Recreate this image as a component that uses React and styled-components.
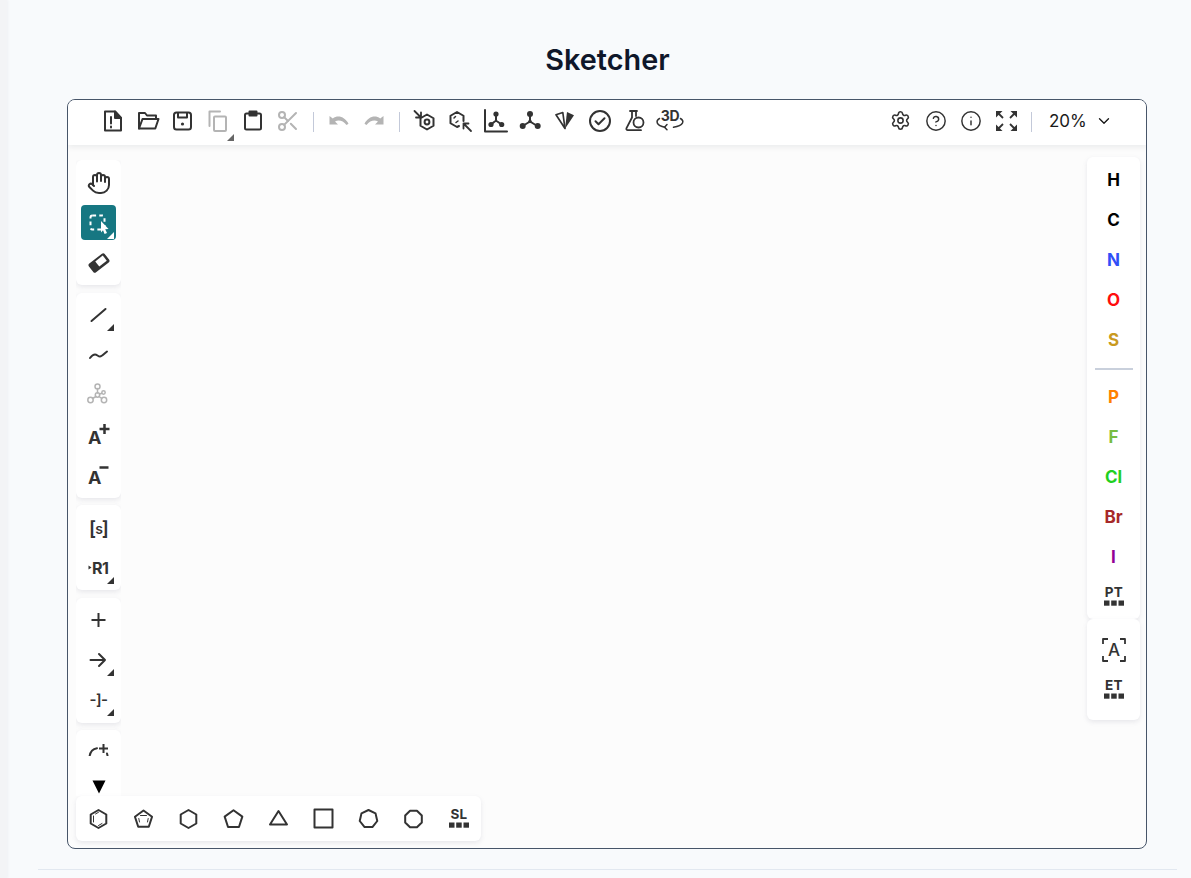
import React from "react";
import styled, { createGlobalStyle } from "styled-components";
import { Hand, Settings, CircleHelp, Info, ChevronDown, Scissors } from "lucide-react";

const INK = "#333333";
const OFF = "#b4b4b4";

const polyPoints = (n, r, start = -90, cx = 11.5, cy = 12) =>
  Array.from({ length: n }, (_, i) => {
    const a = ((start + (360 / n) * i) * Math.PI) / 180;
    return `${(cx + r * Math.cos(a)).toFixed(2)},${(cy + r * Math.sin(a)).toFixed(2)}`;
  }).join(" ");

const Global = createGlobalStyle`
  html, body { margin: 0; padding: 0; height: 100%; }
  body { background: #f8fafc; font-family: Inter, "Liberation Sans", sans-serif; overflow: hidden; }
`;

const Page = styled.div`
  display: flex;
  height: 878px;
  overflow: hidden;
`;
const SideEdge = styled.div`
  flex: 0 0 7px;
  background: #f3f4f6;
  box-shadow: 1px 0 3px rgba(15, 23, 42, 0.04);
`;
const Main = styled.main`
  flex: 1;
  min-width: 0;
  padding: 0 14px 0 31px;
  display: flex;
  flex-direction: column;
`;
const Title = styled.h1`
  margin: 0;
  height: 99px;
  padding-top: 41px;
  box-sizing: border-box;
  text-align: center;
  font-size: 28.8px;
  line-height: 38px;
  font-weight: 600;
  color: #0f172a;
`;
const Editor = styled.section`
  height: 750px;
  margin: 0 30px 0 29px;
  box-sizing: border-box;
  display: flex;
  flex-direction: column;
  border: 1px solid #475569;
  border-radius: 8px;
  background: #fcfcfc;
  overflow: hidden;
`;
const FooterRule = styled.hr`
  margin: 20px 0 0;
  border: 0;
  border-top: 1px solid #e2e8f0;
`;

const TopBar = styled.div`
  flex: 0 0 45px;
  box-sizing: border-box;
  position: relative;
  z-index: 1;
  display: flex;
  align-items: flex-start;
  justify-content: space-between;
  padding: 3px 0 0 27.5px;
  background: #fff;
  box-shadow: 0 2px 6px rgba(15, 23, 42, 0.08);
`;
const TopGroup = styled.div`
  display: flex;
  align-items: flex-start;
`;
const TopSep = styled.div`
  flex: none;
  width: 1px;
  height: 20px;
  margin: 9px 7.5px 0 7.5px;
  background: #c3c9d9;
`;
const Button = styled.button`
  position: relative;
  flex: none;
  width: 35px;
  height: 35px;
  padding: 0;
  display: flex;
  align-items: center;
  justify-content: center;
  border: 0;
  border-radius: 4px;
  background: ${(p) => (p.$active ? "#167782" : "transparent")};
  color: ${(p) => (p.$active ? "#fff" : p.$off ? OFF : INK)};
  font-family: inherit;
`;
const Corner = styled.span`
  position: absolute;
  right: 2px;
  bottom: ${(p) => (p.$low ? "-3px" : "1.5px")};
  width: 0;
  height: 0;
  border-style: solid;
  border-width: 0 0 7px 7px;
  border-color: transparent transparent ${(p) => (p.$color ? p.$color : INK)} transparent;
`;
const ZoomSelect = styled.div`
  display: flex;
  align-items: center;
  gap: 8px;
  width: 107px;
  height: 35px;
  padding-left: 10px;
  box-sizing: border-box;
  font-size: 17px;
  color: #1a1a1a;
`;

const Workspace = styled.div`
  flex: 1;
  min-height: 0;
  display: flex;
  justify-content: space-between;
  padding: 12px 6px 7px 8px;
`;
const LeftColumn = styled.div`
  display: flex;
  flex-direction: column;
  align-items: flex-start;
  padding-top: 3px;
  min-height: 0;
`;
const ToolScroll = styled.div`
  flex: 1;
  min-height: 0;
  width: 45px;
  display: flex;
  flex-direction: column;
  gap: 7.5px;
  overflow: hidden;
`;
const Panel = styled.div`
  flex: none;
  display: flex;
  flex-direction: column;
  align-items: center;
  gap: 5px;
  padding: 5px;
  background: #fff;
  border-radius: 6px;
  box-shadow: 0 2px 5px rgba(103, 104, 132, 0.14);
`;
const ScrollDown = styled.div`
  flex: 0 0 40px;
  width: 45px;
  background: #fff;
  display: flex;
  align-items: flex-end;
  justify-content: center;
  padding-bottom: 2px;
  box-sizing: border-box;
`;
const BottomBar = styled.div`
  flex: none;
  display: flex;
  gap: 10px;
  padding: 5px;
  background: #fff;
  border-radius: 6px;
  box-shadow: 0 2px 5px rgba(103, 104, 132, 0.14);
`;
const RightColumn = styled.div`
  display: flex;
  flex-direction: column;
  width: 53px;
`;
const AtomPanel = styled.div`
  display: flex;
  flex-direction: column;
  align-items: center;
  gap: 5px;
  padding: ${(p) => p.$pad};
  background: #fff;
  border-radius: 6px;
  box-shadow: 0 2px 5px rgba(103, 104, 132, 0.14);
`;
const Atom = styled.button`
  width: 35px;
  height: 35px;
  padding: 0;
  border: 0;
  background: transparent;
  font-family: inherit;
  font-size: 17px;
  font-weight: 700;
  color: ${(p) => p.$color};
`;
const AtomSep = styled.div`
  width: 38px;
  height: 2px;
  margin: 6px 0 4px;
  background: #c9d0dc;
`;

const Svg = styled.svg`
  display: block;
  flex: none;
  overflow: visible;
`;
const Label = styled.text`
  font-family: Inter, "Liberation Sans", sans-serif;
  font-weight: ${(p) => p.$weight || 700};
  font-size: ${(p) => p.$size}px;
  letter-spacing: ${(p) => p.$track || 0}px;
  fill: currentColor;
`;

const Icon = ({ children, w = 24 }) => (
  <Svg width={w} height="24" viewBox={`0 0 ${w} 24`} fill="none" stroke="currentColor" strokeWidth="2" strokeLinejoin="round" strokeLinecap="round">
    {children}
  </Svg>
);

const NewFile = () => (
  <Icon>
    <path d="M4 2.5h10l6 6.5v12.5H4z" />
    <path d="M14 2.5l6 6.5h-6z" fill="currentColor" />
    <path d="M10 8v6.5M10 17.5v1" />
  </Icon>
);
const OpenFile = () => (
  <Icon>
    <path d="M3 19.5V4h6l2 2.5h9V10" />
    <path d="M3 19.5L6.5 10H22.5l-3.2 9.5z" />
  </Icon>
);
const SaveFile = () => (
  <Icon>
    <rect x="3" y="3.5" width="17" height="17" rx="2.5" />
    <path d="M7 4v4.5h9V4" />
    <circle cx="11.5" cy="15" r="1.6" fill="currentColor" stroke="none" />
  </Icon>
);
const CopyFile = () => (
  <Icon>
    <rect x="8" y="7.5" width="12" height="14.5" rx="1" />
    <path d="M14 2.5H3.5v14.5" />
  </Icon>
);
const Paste = () => (
  <Icon>
    <rect x="4" y="4.5" width="16" height="16" rx="1.5" />
    <path d="M8.5 2.5h7v4h-7z" fill="currentColor" />
  </Icon>
);
const Undo = ({ flip }) => (
  <Icon>
    <g transform={flip ? "matrix(-1 0 0 1 24 0)" : undefined}>
      <path stroke="none" fill="currentColor" d="M2.5 7v8.5h8.5l-3-3c3.5-2 8-1 11.5 3.5l2-1.2C18 8 11 5.5 5.8 9.6z" />
    </g>
  </Icon>
);
const Layout = () => (
  <Icon>
    <polygon points={polyPoints(6, 7.5, -90, 14, 13)} />
    <circle cx="14" cy="13" r="2.4" />
    <path d="M1.5 2L8 8.5M8 3.5v5H3" strokeWidth="1.8" />
  </Icon>
);
const Clean = () => (
  <Icon>
    <path d="M15.5 12V6.75L9 3 2.5 6.75v7.5L9 18l2-1" />
    <path d="M7.5 7.5L6 9M8 13.5l2-1.5" strokeWidth="1.5" />
    <path d="M23 22l-7.5-7.5M15.5 19.5v-5h5" strokeWidth="1.8" />
  </Icon>
);
const Axis = () => (
  <Icon>
    <path d="M2 1v21.5h22" />
    <path d="M13 5v6.5L8 15.5M13 11.5l5.5 4" />
    <g fill="currentColor" stroke="none">
      <circle cx="13" cy="5" r="2.6" />
      <circle cx="8" cy="15.5" r="2.6" />
      <circle cx="18.7" cy="15.5" r="2.6" />
    </g>
  </Icon>
);
const Tri = () => (
  <Icon>
    <path d="M12 5v7.5L4.7 17M12 12.5l7.3 4.5" />
    <g fill="currentColor" stroke="none">
      <circle cx="12" cy="5" r="3" />
      <circle cx="4.7" cy="17" r="3" />
      <circle cx="19.7" cy="17" r="3" />
      <circle cx="12" cy="12.5" r="1.8" />
    </g>
  </Icon>
);
const Chiral = () => (
  <Icon>
    <polygon points="3,5.8 9.8,3.5 12,19.5" strokeWidth="1.7" />
    <polygon points="14,3 21,6.2 12,19.8" fill="currentColor" stroke="none" />
  </Icon>
);
const Check = () => (
  <Icon>
    <circle cx="12" cy="12" r="10" />
    <path d="M7.5 12.2l3 3 6-6" />
  </Icon>
);
const Flask = () => (
  <Icon>
    <path d="M7 2h7M9 2v6.5L3.5 19.2c-.5 1 .2 2 1.2 2H18" strokeWidth="1.8" />
    <path d="M13 2v5" strokeWidth="1.8" />
    <circle cx="15.5" cy="13.5" r="5" strokeWidth="1.8" />
  </Icon>
);
const Rotate3D = () => (
  <Icon w={30}>
    <Label x="15" y="11.5" textAnchor="middle" stroke="none" $size={14} $track={-0.3}>3D</Label>
    <path d="M4.5 9.5C.5 12 1 16.5 10 18.2M25.5 9.5c4 2.5 3.5 7-7 8.8" strokeWidth="1.5" />
    <path d="M12 15.5l-2.5 2.7 2.5 2.6" strokeWidth="1.5" />
  </Icon>
);
const FullCorner = ({ transform }) => (
  <g transform={transform}>
    <polygon points="2,2 8.5,2 2,8.5" fill="currentColor" stroke="none" />
    <path d="M4 4l5 5" strokeWidth="1.8" strokeLinecap="butt" />
  </g>
);
const FullScreen = () => (
  <Icon>
    <FullCorner />
    <FullCorner transform="matrix(-1 0 0 1 25 0)" />
    <FullCorner transform="matrix(1 0 0 -1 0 24)" />
    <FullCorner transform="matrix(-1 0 0 -1 25 24)" />
  </Icon>
);

const SelectTool = () => (
  <Icon>
    <rect x="3.5" y="4.5" width="14" height="14" rx="2" strokeDasharray="3.6 3.2" strokeLinecap="butt" />
    <polygon points="14,10 21.5,18 18.2,18.2 20,22 17.6,23 16,19.2 14,21.5" fill="currentColor" stroke="none" />
  </Icon>
);
const Eraser = () => (
  <Icon>
    <g transform="rotate(-38 12 12)">
      <rect x="2" y="6.5" width="20" height="11" rx="2" fill="currentColor" stroke="none" />
      <rect x="10" y="8.5" width="9.5" height="6.5" fill="#fff" stroke="none" />
    </g>
  </Icon>
);
const Bond = () => (
  <Icon>
    <path d="M4.5 18L18.5 6" />
  </Icon>
);
const Chain = () => (
  <Icon>
    <path d="M3 15c1.5-2 3-3.5 5-3.5s3 2 5 2 4.500-3 7-5" />
  </Icon>
);
const Stereo = () => (
  <Icon>
    <g strokeWidth="1.5">
      <path d="M10.5 5.500V10M9 13.500L5.500 15.500M12 13.500L14.800 15.500M12.500 11L15 10.200" />
      <circle cx="10.500" cy="3.500" r="2.500" />
      <circle cx="3.500" cy="17" r="2.700" />
      <circle cx="17" cy="17" r="2.700" />
      <circle cx="10.500" cy="12" r="2.200" />
      <circle cx="16.500" cy="9.500" r="1.700" />
    </g>
  </Icon>
);
const Charge = ({ plus }) => (
  <Icon>
    <Label x="1" y="21" stroke="none" $size={18}>A</Label>
    {plus ? <path d="M17.500 1v10M12.500 6h10" strokeLinecap="butt" strokeWidth="2.500" /> : <path d="M12.500 4.500h9" strokeLinecap="butt" strokeWidth="2.500" />}
  </Icon>
);
const Salt = () => (
  <Icon>
    <Label x="11.500" y="18.500" textAnchor="middle" stroke="none" $size={19} $weight={600} $track={-1}>
      [<tspan fontSize="14" dy="-1">s</tspan>
      <tspan dy="1">]</tspan>
    </Label>
  </Icon>
);
const Bracket = () => (
  <Icon>
    <Label x="11.500" y="17" textAnchor="middle" stroke="none" $size={15} $weight={600} $track={-0.5}>-]-</Label>
  </Icon>
);
const RGroup = () => (
  <Icon>
    <polygon points="1.500,9.500 4.500,11.500 1.500,13.500" fill="currentColor" stroke="none" />
    <Label x="5" y="18" stroke="none" $size={16} $track={-0.6}>R1</Label>
  </Icon>
);
const Plus = () => (
  <Icon>
    <path d="M4.500 12h14M11.500 5v14" strokeLinecap="butt" />
  </Icon>
);
const Arrow = () => (
  <Icon>
    <path d="M3.500 12H18M12 6l6 6-6 6" />
  </Icon>
);
const Ring = () => (
  <Icon>
    <path d="M2.500 16C3 11 6 7.800 10 7.200" />
    <path d="M16.500 3v9M12 7.500h9" strokeLinecap="butt" />
    <path d="M20 12.500l.5 2" />
  </Icon>
);
const DownTriangle = () => (
  <Svg width="14" height="14" viewBox="0 0 14 14">
    <polygon points="0.500,0.500 13.500,0.500 7,13.500" fill="#000" />
  </Svg>
);
const Template = ({ text }) => (
  <Icon>
    <Label x="12" y="12" textAnchor="middle" stroke="none" $size={13.5} $track={0.3}>{text}</Label>
    <g fill="currentColor" stroke="none">
      <rect x="2" y="15.500" width="5.500" height="5.200" />
      <rect x="9.200" y="15.500" width="5.500" height="5.200" />
      <rect x="16.500" y="15.500" width="5.500" height="5.200" />
    </g>
  </Icon>
);
const ExtendedAtom = () => (
  <Icon>
    <path d="M1 6V1h5M18 1h5v5M23 18v5h-5M6 23H1v-5" strokeWidth="1.800" strokeLinecap="butt" />
    <Label x="12" y="18" textAnchor="middle" stroke="none" $size={17} $weight={500}>A</Label>
  </Icon>
);
const Benzene = () => (
  <Icon>
    <polygon points={polyPoints(6, 9)} />
    <path d="M6.500 9v6M8.500 7l3-1.700M15 16.500L11.500 18.500" strokeWidth="1" />
  </Icon>
);
const Cyclopentadiene = () => (
  <Icon>
    <polygon points={polyPoints(5, 9, -90, 11.500, 12.500)} />
    <path d="M7.500 15l-.7-3.500M15.500 15l.7-3.500M8.500 8.500h6" strokeWidth="1" />
  </Icon>
);
const Shape = ({ n, start }) => (
  <Icon>
    <polygon points={polyPoints(n, n === 5 ? 9.300 : 9, start, 11.500, n === 5 ? 12.500 : 12)} />
  </Icon>
);
const Triangle = () => (
  <Icon>
    <polygon points="11.500,4 20,17.500 3,17.500" />
  </Icon>
);
const Square = () => (
  <Icon>
    <rect x="2.500" y="2.500" width="18" height="18" />
  </Icon>
);

const firstAtoms = [
  ["H", "#000000"],
  ["C", "#000000"],
  ["N", "#304ff7"],
  ["O", "#ff0d0d"],
  ["S", "#c99a1f"],
];
const secondAtoms = [
  ["P", "#ff8000"],
  ["F", "#78bc42"],
  ["Cl", "#1fd01f"],
  ["Br", "#a62929"],
  ["I", "#940094"],
];

export default function App() {
  return (
    <Page>
      <Global />
      <SideEdge />
      <Main>
        <Title>Sketcher</Title>
        <Editor>
          <TopBar>
            <TopGroup>
              <Button><NewFile /></Button>
              <Button><OpenFile /></Button>
              <Button><SaveFile /></Button>
              <Button $off><CopyFile /><Corner $low $color="#666" /></Button>
              <Button><Paste /></Button>
              <Button $off><Scissors size={24} strokeWidth={2} /></Button>
              <TopSep />
              <Button $off><Undo /></Button>
              <Button $off><Undo flip /></Button>
              <TopSep />
              <Button><Layout /></Button>
              <Button><Clean /></Button>
              <Button><Axis /></Button>
              <Button><Tri /></Button>
              <Button><Chiral /></Button>
              <Button><Check /></Button>
              <Button><Flask /></Button>
              <Button><Rotate3D /></Button>
            </TopGroup>
            <TopGroup>
              <Button><Settings size={21} strokeWidth={1.800} /></Button>
              <Button><CircleHelp size={22} strokeWidth={1.600} /></Button>
              <Button><Info size={22} strokeWidth={1.600} /></Button>
              <Button><FullScreen /></Button>
              <TopSep />
              <ZoomSelect>20% <ChevronDown size={18} strokeWidth={1.800} /></ZoomSelect>
            </TopGroup>
          </TopBar>
          <Workspace>
            <LeftColumn>
              <ToolScroll>
                <Panel>
                  <Button><Hand size={24} strokeWidth={2} /></Button>
                  <Button $active><SelectTool /><Corner $color="#fff" /></Button>
                  <Button><Eraser /></Button>
                </Panel>
                <Panel>
                  <Button><Bond /><Corner /></Button>
                  <Button><Chain /></Button>
                  <Button $off><Stereo /></Button>
                  <Button><Charge plus /></Button>
                  <Button><Charge /></Button>
                </Panel>
                <Panel>
                  <Button><Salt /></Button>
                  <Button><RGroup /><Corner /></Button>
                </Panel>
                <Panel>
                  <Button><Plus /></Button>
                  <Button><Arrow /><Corner /></Button>
                  <Button><Bracket /><Corner /></Button>
                </Panel>
                <Panel>
                  <Button><Ring /></Button>
                </Panel>
              </ToolScroll>
              <ScrollDown><DownTriangle /></ScrollDown>
              <BottomBar>
                <Button><Benzene /></Button>
                <Button><Cyclopentadiene /></Button>
                <Button><Shape n={6} start={-90} /></Button>
                <Button><Shape n={5} start={-90} /></Button>
                <Button><Triangle /></Button>
                <Button><Square /></Button>
                <Button><Shape n={7} start={-90} /></Button>
                <Button><Shape n={8} start={-67.500} /></Button>
                <Button><Template text="SL" /></Button>
              </BottomBar>
            </LeftColumn>
            <RightColumn>
              <AtomPanel $pad="5px 9px 5px">
                {firstAtoms.map(([sym, color]) => (
                  <Atom key={sym} $color={color}>{sym}</Atom>
                ))}
                <AtomSep />
                {secondAtoms.map(([sym, color]) => (
                  <Atom key={sym} $color={color}>{sym}</Atom>
                ))}
                <Button><Template text="PT" /></Button>
              </AtomPanel>
              <AtomPanel $pad="13px 9px 12.500px">
                <Button><ExtendedAtom /></Button>
                <Button><Template text="ET" /></Button>
              </AtomPanel>
            </RightColumn>
          </Workspace>
        </Editor>
        <FooterRule />
      </Main>
    </Page>
  );
}
